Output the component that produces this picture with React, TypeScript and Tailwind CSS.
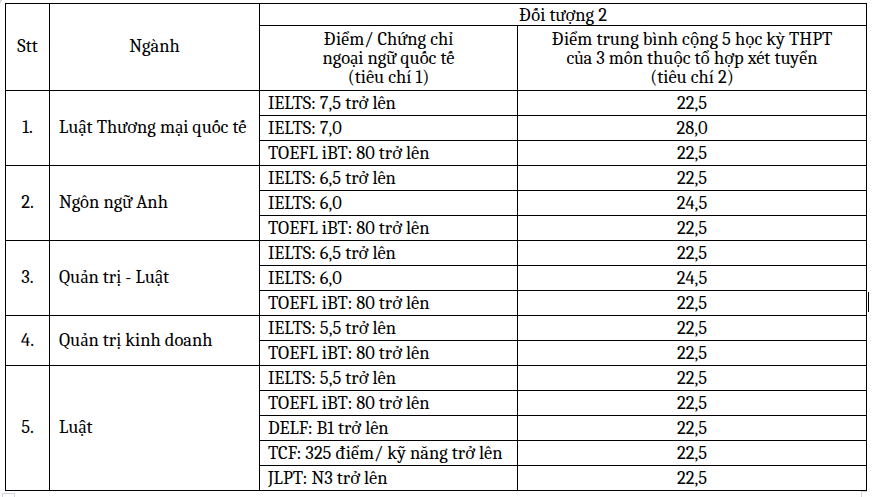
const groups = [
  {
    stt: "1.",
    name: "Luật Thương mại quốc tế",
    rows: [
      ["IELTS: 7,5 trở lên", "22,5"],
      ["IELTS: 7,0", "28,0"],
      ["TOEFL iBT: 80 trở lên", "22,5"],
    ],
  },
  {
    stt: "2.",
    name: "Ngôn ngữ Anh",
    rows: [
      ["IELTS: 6,5 trở lên", "22,5"],
      ["IELTS: 6,0", "24,5"],
      ["TOEFL iBT: 80 trở lên", "22,5"],
    ],
  },
  {
    stt: "3.",
    name: "Quản trị - Luật",
    rows: [
      ["IELTS: 6,5 trở lên", "22,5"],
      ["IELTS: 6,0", "24,5"],
      ["TOEFL iBT: 80 trở lên", "22,5"],
    ],
  },
  {
    stt: "4.",
    name: "Quản trị kinh doanh",
    rows: [
      ["IELTS: 5,5 trở lên", "22,5"],
      ["TOEFL iBT: 80 trở lên", "22,5"],
    ],
  },
  {
    stt: "5.",
    name: "Luật",
    rows: [
      ["IELTS: 5,5 trở lên", "22,5"],
      ["TOEFL iBT: 80 trở lên", "22,5"],
      ["DELF: B1 trở lên", "22,5"],
      ["TCF: 325 điểm/ kỹ năng trở lên", "22,5"],
      ["JLPT: N3 trở lên", "22,5"],
    ],
  },
];

export default function App() {
  return (
    <div className="relative h-[497px] w-[872px] overflow-hidden bg-white pl-[5px] pt-[3px] font-serif text-[18.5px] text-black">
      <table className="w-[862px] table-fixed border-collapse border border-black font-serif">
        <colgroup>
          <col className="w-[44px]" />
          <col className="w-[210px]" />
          <col className="w-[258px]" />
          <col />
        </colgroup>
        <thead>
          <tr className="h-[22px]">
            <th rowSpan={2} className="border border-black p-0 font-serif font-normal">
              Stt
            </th>
            <th rowSpan={2} className="border border-black p-0 font-serif font-normal">
              Ngành
            </th>
            <th
              colSpan={2}
              className="border-x border-t border-b border-black border-b-dotted p-0 text-center font-serif font-normal leading-[20px]"
            >
              Đối tượng 2
            </th>
          </tr>
          <tr className="h-[65px]">
            <th className="border border-black border-t-dotted p-0 text-center font-serif font-normal leading-[19px]">
              Điểm/ Chứng chỉ
              <br />
              ngoại ngữ quốc tế
              <br />
              (tiêu chí 1)
            </th>
            <th className="border border-black border-t-dotted p-0 text-center font-serif font-normal leading-[19px]">
              Điểm trung bình cộng 5 học kỳ THPT
              <br />
              của 3 môn thuộc tổ hợp xét tuyển
              <br />
              (tiêu chí 2)
            </th>
          </tr>
        </thead>
        <tbody>
          {groups.map((g) =>
            g.rows.map((r, i) => {
              const first = i === 0;
              const last = i === g.rows.length - 1;
              const rowBorder = `border-x border-black ${
                first ? "border-t" : "border-t border-t-dotted"
              } ${last ? "border-b" : "border-b border-b-dotted"}`;
              return (
                <tr key={g.stt + i} className="h-[25px]">
                  {first && (
                    <td
                      rowSpan={g.rows.length}
                      className="border border-black p-0 text-center font-serif"
                    >
                      {g.stt}
                    </td>
                  )}
                  {first && (
                    <td
                      rowSpan={g.rows.length}
                      className="border border-black py-0 pl-[9px] font-serif"
                    >
                      {g.name}
                    </td>
                  )}
                  <td className={`${rowBorder} py-0 pl-[8px] font-serif leading-[20px]`}>
                    {r[0]}
                  </td>
                  <td className={`${rowBorder} p-0 text-center font-serif leading-[20px]`}>
                    {r[1]}
                  </td>
                </tr>
              );
            })
          )}
        </tbody>
      </table>

      {/* word table handles */}
      <div className="absolute left-0 top-0 h-[3px] w-[2px] border-l border-t border-gray-300" />
      <div className="absolute left-[2px] top-[493px] h-[5px] w-[13px] border-l border-r border-t border-gray-300" />
      <div className="absolute left-[861px] top-[491px] h-[6px] w-[6px] border-l border-t border-gray-300" />
      <div className="absolute left-[868px] top-[292px] h-[20px] w-[1px] bg-black" />
    </div>
  );
}
